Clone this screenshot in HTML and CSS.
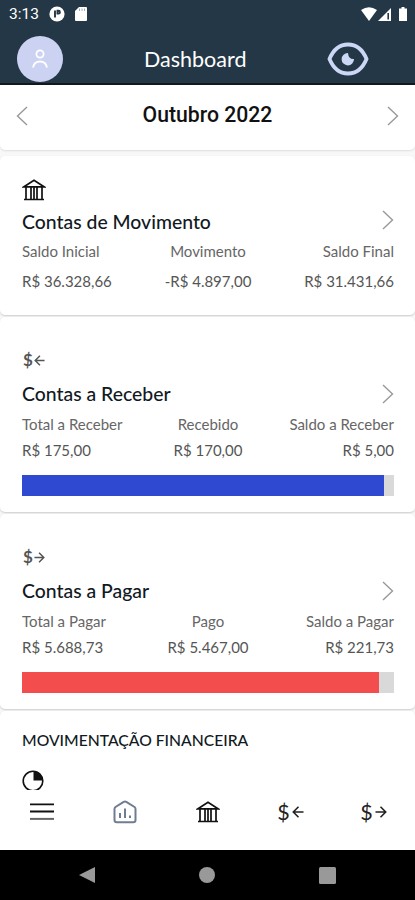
FILE: index.html
```html
<!DOCTYPE html>
<html lang="pt-BR">
<head>
    <meta charset="UTF-8">
    <meta name="viewport" content="width=device-width, initial-scale=1.0">
    <title>Dashboard</title>
    <link rel="stylesheet" href="styles.css">
</head>
<body>
    <svg class="defs" width="0" height="0">
        <symbol id="bank" viewBox="0 0 24 24">
            <path d="M2 8.8 L12 2.2 L22 8.8 Z M4 9 V21 M9 9 V21 M12 9 V21 M15 9 V21 M20 9 V21 M2 21.5 H22" fill="none" stroke="currentColor" stroke-width="1.7"/>
        </symbol>
        <symbol id="next" viewBox="0 0 12 20">
            <path d="M1 1 L10.5 10 L1 19" fill="none" stroke="currentColor" stroke-width="1.4"/>
        </symbol>
        <symbol id="arrow" viewBox="0 0 12 12">
            <path d="M6.5 0.8 L1.3 6 L6.5 11.2 M1.3 6 H11.5" fill="none" stroke="currentColor" stroke-width="1.6"/>
        </symbol>
    </svg>

    <header>
        <div class="status">
            <span class="clock">3:13</span>
            <svg width="16" height="16" viewBox="0 0 16 16">
                <circle cx="8" cy="8" r="7.6" fill="#fff"/>
                <path d="M6 4.5 V11.5 M8.5 8.5 V4.8 H9.5 a1.4 1.4 0 0 1 0 2.8 H8.5" fill="none" stroke="#243746" stroke-width="1.9"/>
            </svg>
            <svg class="sd" width="12" height="14" viewBox="0 0 12 14">
                <path d="M4 0 H11 Q12 0 12 1 V13 Q12 14 11 14 H1 Q0 14 0 13 V4 Z" fill="#fff"/>
                <path d="M4.5 1.5 V4 M7 1.5 V4 M9.5 1.5 V4" stroke="#a5adb4" stroke-width="1"/>
            </svg>
            <svg class="signals" width="48" height="16" viewBox="0 0 48 16">
                <path d="M0 4 Q8 -1.5 16 4 L8 15 Z" fill="#fff"/>
                <path d="M30 2 V15 H17 Z" fill="#fff"/>
                <path d="M27.2 7 V13.5" stroke="#243746" stroke-width="1.6"/>
                <path d="M38 2.500 H40.500 V1 H43.500 V2.500 H46 V15 H38 Z" fill="#fff"/>
            </svg>
        </div>
        <div class="topbar">
            <div class="avatar">
                <svg width="18" height="20" viewBox="0 0 18 20">
                    <circle cx="9" cy="5" r="3.6"/>
                    <path d="M2 18.5 C3.5 10.5 14.5 10.5 16 18.5"/>
                </svg>
            </div>
            <h1>Dashboard</h1>
            <svg class="eye" width="42" height="34" viewBox="0 0 42 34">
                <path d="M2.500 17 C6 8.500 12.500 2.500 21 2.500 C29.500 2.500 36 8.500 39.500 17 C36 25.500 29.500 31.500 21 31.500 C12.500 31.500 6 25.500 2.500 17 Z" fill="none" stroke="#cbd7f5" stroke-width="3.8"/>
                <path d="M21 11 A6.200 6.200 0 1 0 27 17 Q21.500 17.500 21 11 Z" fill="#cbd7f5"/>
            </svg>
        </div>
    </header>

    <main>
        <section class="card month">
            <svg class="chevron back"><use href="#next"/></svg>
            <h2>Outubro 2022</h2>
            <svg class="chevron"><use href="#next"/></svg>
        </section>

        <section class="card accounts">
            <svg class="bank"><use href="#bank"/></svg>
            <div class="title">
                <h3>Contas de Movimento</h3>
                <svg class="chevron"><use href="#next"/></svg>
            </div>
            <div class="row">
                <span>Saldo Inicial</span><span>Movimento</span><span>Saldo Final</span>
            </div>
            <div class="row values">
                <span>R$ 36.328,66</span><span>-R$ 4.897,00</span><span>R$ 31.431,66</span>
            </div>
        </section>

        <section class="card bills">
            <div class="money small"><span>$</span><svg><use href="#arrow"/></svg></div>
            <div class="title">
                <h3>Contas a Receber</h3>
                <svg class="chevron"><use href="#next"/></svg>
            </div>
            <div class="row">
                <span>Total a Receber</span><span>Recebido</span><span>Saldo a Receber</span>
            </div>
            <div class="row values">
                <span>R$ 175,00</span><span>R$ 170,00</span><span>R$ 5,00</span>
            </div>
            <div class="bar"><div class="fill blue" style="width: 97.2%"></div></div>
        </section>

        <section class="card bills">
            <div class="money small out"><span>$</span><svg><use href="#arrow"/></svg></div>
            <div class="title">
                <h3>Contas a Pagar</h3>
                <svg class="chevron"><use href="#next"/></svg>
            </div>
            <div class="row">
                <span>Total a Pagar</span><span>Pago</span><span>Saldo a Pagar</span>
            </div>
            <div class="row values">
                <span>R$ 5.688,73</span><span>R$ 5.467,00</span><span>R$ 221,73</span>
            </div>
            <div class="bar"><div class="fill red" style="width: 96.1%"></div></div>
        </section>

        <section class="card finance">
            <h4>MOVIMENTAÇÃO FINANCEIRA</h4>
            <svg width="22" height="22" viewBox="0 0 22 22">
                <circle cx="11" cy="11" r="9.8" fill="none" stroke="#111" stroke-width="1.6"/>
                <path d="M11.500 1 A10 10 0 0 1 21 10.500 H11.500 Z" fill="#111"/>
            </svg>
        </section>
    </main>

    <nav class="tabs">
        <a>
            <svg width="24" height="18" viewBox="0 0 24 18">
                <path d="M0 1.300 H24 M0 8.500 H24" stroke="#111" stroke-width="1.800"/>
                <path d="M0 15.900 H24" stroke="#666" stroke-width="2"/>
            </svg>
        </a>
        <a>
            <svg class="home" width="24" height="24" viewBox="0 0 24 24">
                <path d="M1.500 9 Q1.500 7.800 2.500 7 L10.700 1.800 Q12 1 13.300 1.800 L21.500 7 Q22.500 7.800 22.500 9 V20 Q22.500 22.300 20.200 22.300 H3.800 Q1.500 22.300 1.500 20 Z"/>
                <path d="M7 13 V18 M12 8.500 V18 M17 15.500 V18"/>
            </svg>
        </a>
        <a><svg class="bank"><use href="#bank"/></svg></a>
        <a class="money"><span>$</span><svg><use href="#arrow"/></svg></a>
        <a class="money out"><span>$</span><svg><use href="#arrow"/></svg></a>
    </nav>

    <footer>
        <svg width="16" height="18" viewBox="0 0 16 18"><path d="M16 1 V17 L0 9 Z"/></svg>
        <svg width="16" height="16" viewBox="0 0 16 16"><circle cx="8" cy="8" r="8"/></svg>
        <svg width="17" height="17" viewBox="0 0 17 17"><rect width="17" height="17" rx="1.500"/></svg>
    </footer>
</body>
</html>
```
FILE: styles.css
```css
* {
    box-sizing: border-box;
}
body {
    margin: 0;
    height: 900px;
    display: flex;
    flex-direction: column;
    overflow: hidden;
    background-color: #f8f8f8;
    color: #111923;
    font-family: Lato, sans-serif;
}
svg {
    display: block;
    flex-shrink: 0;
}
h1, h2, h3, h4 {
    margin: 0;
}
.defs {
    position: absolute;
}
header {
    height: 85px;
    flex-shrink: 0;
    background-color: #243746;
    border-bottom: 2px solid #101820;
    color: white;
}
.status {
    height: 28px;
    display: flex;
    align-items: center;
    padding: 0 14px 0 9px;
}
.clock {
    width: 40px;
    font: 400 15.5px Roboto, sans-serif;
}
.sd {
    margin-left: 10px;
}
.signals {
    margin-left: auto;
    margin-right: -8px;
}
.topbar {
    display: grid;
    grid-template-columns: 127px 1fr 128px;
    align-items: center;
    height: 61px;
    padding: 0 0 0 17px;
    margin-right: 3px;
}
.avatar {
    width: 46px;
    height: 46px;
    border-radius: 50%;
    background-color: #ccd3f2;
    display: flex;
    align-items: center;
    justify-content: center;
}
.avatar svg {
    fill: none;
    stroke: white;
    stroke-width: 1.8;
}
h1 {
    font-size: 21.5px;
    font-weight: 400;
    line-height: 30px;
}
.eye {
    margin-left: 43px;
}
main {
    height: 705px;
    overflow: hidden;
}
.card {
    background-color: white;
    border-radius: 5px;
    padding: 0 21px 0 22px;
    box-shadow: 0 1px 2px #ccc;
    margin-bottom: 2px;
}
.chevron {
    width: 12px;
    height: 20px;
    color: #999;
}
.month {
    height: 65px;
    margin-bottom: 6px;
    padding: 0 16px 4px;
    display: flex;
    align-items: center;
    justify-content: space-between;
    border-radius: 0 0 5px 5px;
    box-shadow: 0 1px 2px #ddd;
}
.back {
    transform: scaleX(-1);
}
h2 {
    font: 500 21.2px/30px Roboto, sans-serif;
    color: #111;
    margin-bottom: 2px;
}
.accounts {
    height: 159px;
    padding-top: 22px;
}
.bank {
    width: 24px;
    height: 24px;
    color: #111;
}
.title {
    display: flex;
    justify-content: space-between;
    align-items: center;
    height: 28px;
}
h3 {
    font-size: 19.4px;
    font-weight: 500;
    line-height: 28px;
}
.row {
    display: grid;
    grid-template-columns: 1fr 1fr 1fr;
    height: 26px;
    line-height: 26px;
    font-size: 15px;
    color: #666;
    white-space: nowrap;
}
.row span:nth-child(2) {
    text-align: center;
}
.row span:nth-child(3) {
    text-align: right;
}
.values {
    color: #555;
}
.accounts .title {
    margin-top: 6px;
}
.accounts .chevron {
    margin-bottom: 4px;
}
.accounts .row {
    height: 30px;
    line-height: 30px;
}
.bills {
    height: 195px;
    padding-top: 33px;
}
.bills .title {
    margin: 10px 0 3px;
}
.bar {
    height: 21px;
    margin-top: 12px;
    background-color: #d9d9d9;
}
.fill {
    height: 100%;
}
.blue {
    background-color: #2f49d1;
}
.red {
    background-color: #f44d4d;
}
.money {
    display: flex;
    align-items: center;
    gap: 2px;
    font-size: 21.5px;
    line-height: 24px;
    color: #222;
}
.money svg {
    width: 12px;
    height: 12px;
}
.out svg {
    transform: scaleX(-1);
}
.small {
    height: 20px;
    gap: 1px;
    padding-left: 1px;
    font-size: 17px;
    font-weight: 700;
    line-height: 20px;
    color: #555;
}
.small svg {
    width: 11px;
    height: 11px;
}
.finance {
    height: 100px;
    padding-top: 18px;
}
h4 {
    font-size: 15.7px;
    font-weight: 500;
    line-height: 22px;
    margin-bottom: 19px;
}
.tabs {
    height: 60px;
    flex-shrink: 0;
    display: grid;
    grid-template-columns: repeat(5, 1fr);
    background-color: white;
    padding-bottom: 16px;
}
.tabs a {
    display: flex;
    align-items: center;
    justify-content: center;
}
.home {
    fill: none;
    stroke: #6f7d90;
    stroke-width: 2;
}
footer {
    height: 50px;
    flex-shrink: 0;
    display: flex;
    align-items: center;
    justify-content: space-between;
    padding: 0 79px;
    background-color: black;
    fill: #999;
}
```
